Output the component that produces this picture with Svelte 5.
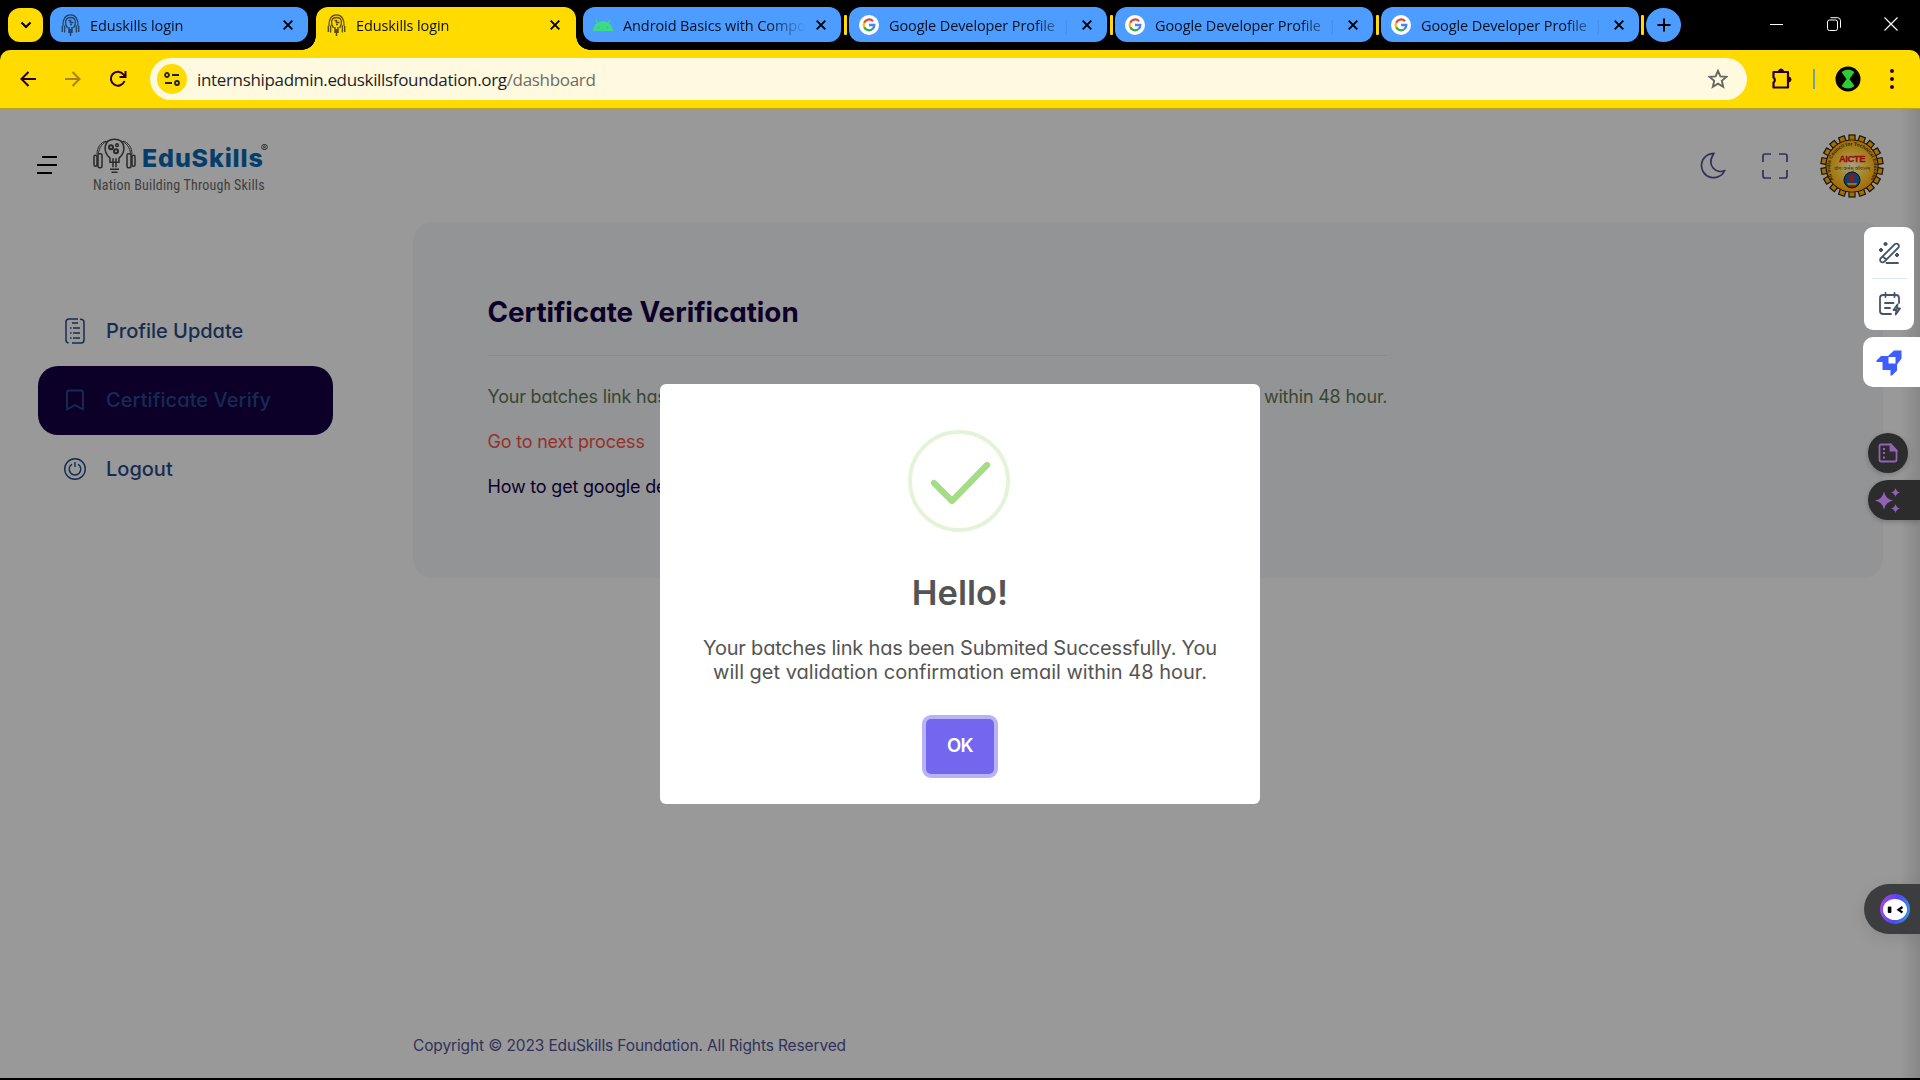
<script>
  const tabs = [
    { title: 'Eduskills login', icon: 'edu' },
    { title: 'Eduskills login', icon: 'edu', active: true },
    { title: 'Android Basics with Compo', icon: 'android', sep: true },
    { title: 'Google Developer Profile  |', icon: 'google', sep: true },
    { title: 'Google Developer Profile  |', icon: 'google', sep: true },
    { title: 'Google Developer Profile  |', icon: 'google', sep: true },
  ];
  const teeth = Array.from({ length: 18 }, (_, i) => i * 20);
</script>

{#snippet bulb(size)}
  <svg class="bulb" width={size} height={size * 0.82} viewBox="0 0 43 35" fill="none" stroke="currentColor" stroke-width="1.500">
    <path d="M17 20C9 13 11 1 21.500 1S34 13 26 20v4h-9z" />
    <path d="M5 17C6 9 10 4 15 3M38 17C37 9 33 4 28 3M4 16C4 9 8 4 13 3M39 16C39 9 35 4 30 3" stroke-width="1" />
    <rect x="1" y="17" width="3" height="11" rx="1.500" /><rect x="5" y="15.500" width="4" height="14" rx="1.500" />
    <rect x="39" y="17" width="3" height="11" rx="1.500" /><rect x="34" y="15.500" width="4" height="14" rx="1.500" />
    <circle cx="18" cy="9" r="2" stroke-width="2" /><circle cx="24" cy="7" r="1.300" /><circle cx="23" cy="13" r="2" stroke-width="2" />
    <path d="M17 31h9M18.500 34h6M20 20v9M23 20v9" />
  </svg>
{/snippet}

<div class="screen">
  <div class="strip">
    <div class="search"><svg width="14" height="14" viewBox="0 0 14 14" fill="none" stroke="#000" stroke-width="2.200"><path d="M2.500 4.500L7 9l4.500-4.500" /></svg></div>
    {#each tabs as tab}
      <div class="tab" class:active={tab.active}>
        <span class="fav">
          {#if tab.icon === 'edu'}
            <svg width="19" height="22" viewBox="0 0 19 22" fill="none" stroke="currentColor"><path d="M6.500 14C3.500 10 3.500 3.500 9.500 3.500s6 6.500 3 10.500M2 12C1.500 5 4.500.8 9.500.8S17.500 5 17 12" stroke-width="1.300" /><path d="M1.300 12v6M3.600 11.500v7M17.700 12v6M15.400 11.500v7" stroke-width="1.400" /><path d="M8 13v6M11 13v6M9.500 15v7" stroke-width="1.500" /><path d="M7.500 6.500h2v2h3M9 10.500h2" stroke-width="1.600" /></svg>
          {:else if tab.icon === 'android'}
            <svg width="20" height="20" viewBox="0 0 20 20"><path d="M0 16a10 10 0 0 1 20 0z" fill="#3ddc84" /><path d="M4.500 8L3 4.500M15.500 8L17 4.500" stroke="#3ddc84" stroke-width="1.200" /><circle cx="5.500" cy="12.500" r=".9" fill="#4c9dff" /><circle cx="14.500" cy="12.500" r=".9" fill="#4c9dff" /></svg>
          {:else}
            <svg width="20" height="20" viewBox="0 0 20 20" fill="none" stroke-width="2.300"><circle cx="10" cy="10" r="10" fill="#fff" /><path d="M14 6.200A5.300 5.300 0 0 0 5.200 7.700" stroke="#ea4335" /><path d="M5.200 7.700a5.300 5.300 0 0 0 0 4.600" stroke="#fbbc05" /><path d="M5.200 12.300a5.300 5.300 0 0 0 8.300 1.700" stroke="#34a853" /><path d="M13.500 14A5.300 5.300 0 0 0 15.300 10H10" stroke="#4285f4" /></svg>
          {/if}
        </span>
        <span class="title">{tab.title}</span>
        <svg class="x" width="10" height="10" viewBox="0 0 10 10" stroke="#000" stroke-width="1.900"><path d="M.7.7l8.600 8.600M9.300.7L.7 9.300" /></svg>
      </div>
      {#if tab.sep}<i class="sep"></i>{/if}
    {/each}
    <div class="plus"><svg width="14" height="14" viewBox="0 0 14 14" stroke="#000" stroke-width="2"><path d="M7 .5v13M.5 7h13" /></svg></div>
    <div class="win">
      <svg width="14" height="14" viewBox="0 0 14 14" stroke="#fff"><path d="M0 7.500h13" /></svg>
      <svg width="14" height="14" viewBox="0 0 14 14" fill="none" stroke="#fff"><rect x=".5" y="3" width="10" height="10.500" rx="2" /><path d="M3.500.7h7a3 3 0 0 1 3 3v7" /></svg>
      <svg width="14" height="14" viewBox="0 0 14 14" stroke="#fff" stroke-width="1.200"><path d="M.5.5l13 13M13.500.5l-13 13" /></svg>
    </div>
  </div>

  <div class="toolbar-bg">
    <div class="toolbar">
      <div class="nav">
        <svg width="18" height="18" viewBox="0 0 18 18" fill="none" stroke="#270018" stroke-width="2"><path d="M17 9H3M9.500 2L2.500 9l7 7" /></svg>
        <svg width="18" height="18" viewBox="0 0 18 18" fill="none" stroke="#a68219" stroke-width="2"><path d="M1 9h14M8.500 2l7 7-7 7" /></svg>
        <svg width="18" height="18" viewBox="0 0 18 18" fill="none" stroke="#270018" stroke-width="2"><path d="M15.500 11A7 7 0 1 1 14.500 4.500L16 6.500M16.500 1v6h-6" /></svg>
      </div>
      <div class="omni">
        <span class="site"><svg width="16" height="14" viewBox="0 0 16 14" fill="none" stroke="#222" stroke-width="1.800"><circle cx="3" cy="3" r="2" /><path d="M8 3h7M1 11h7" /><circle cx="13" cy="11" r="2" /></svg></span>
        <span class="url">internshipadmin.eduskillsfoundation.org<em>/dashboard</em></span>
        <svg class="star" width="20" height="20" viewBox="0 0 20 20" fill="none" stroke="#666" stroke-width="1.900"><path d="M10 1.800l2.400 5.600 6 .5-4.600 4 1.400 5.900L10 14.700l-5.200 3.100 1.400-5.900-4.600-4 6-.5z" /></svg>
      </div>
      <svg class="puz" width="22" height="22" viewBox="0 0 22 22" fill="none" stroke="#270018" stroke-width="2.200"><path d="M2.500 4h14.500v15.500H2.500v-5a3 3 0 0 0 0-5z" stroke-linejoin="round" /><path d="M7.500 3.500a2.500 2.500 0 0 1 5 0zM17.500 9a2.500 2.500 0 0 1 0 5z" fill="#270018" stroke-width="1" /></svg>
      <i class="bsep"></i>
      <svg class="ava" width="26" height="26" viewBox="0 0 26 26"><circle cx="13" cy="13" r="12.500" /><path d="M6.500 6Q13 1 19.500 6L14.500 13l5 7Q13 25 6.500 20l5-7z" fill="#2fcb35" /></svg>
      <svg class="dots" width="4" height="20" viewBox="0 0 4 20" fill="#270018"><circle cx="2" cy="2" r="2" /><circle cx="2" cy="10" r="2" /><circle cx="2" cy="18" r="2" /></svg>
    </div>
  </div>

  <div class="page">
    <header>
      <svg class="burger" width="20" height="18" viewBox="0 0 20 18" stroke="#000" stroke-width="2"><path d="M5 1h15M0 9h20M0 17h15" /></svg>
      <div class="logo">
        <div class="brand">{@render bulb(43)}<b>EduSkills</b><sup>®</sup></div>
        <small>Nation Building Through Skills</small>
      </div>
      <div class="tools">
        <svg width="26" height="27" viewBox="0 0 26 27" fill="none" stroke="#31315b" stroke-width="1.700"><path d="M14 1.300A12.200 12.200 0 1 0 24.800 18.500C16.500 22 5.500 14 14 1.300z" stroke-linejoin="round" /></svg>
        <svg class="full" width="26" height="26" viewBox="0 0 26 26" fill="none" stroke="#31315b" stroke-width="1.700"><path d="M1 9V3q0-2 2-2h6M17 1h6q2 0 2 2v6M25 17v6q0 2-2 2h-6M9 25H3q-2 0-2-2v-6" /></svg>
        <svg class="aicte" width="64" height="64" viewBox="-32 -32 64 64">
          <defs>
            <radialGradient id="gold"><stop offset="0" stop-color="#a8a184" /><stop offset=".5" stop-color="#a58a30" /><stop offset="1" stop-color="#a66d00" /></radialGradient>
            <path id="arc" d="M-18.500 13.500A22 22 0 1 1 18.500 13.500" />
          </defs>
          {#each teeth as a}<rect x="-3" y="-31" width="6" height="8" fill="#a66d00" stroke="#1a1406" stroke-width="1.200" transform="rotate({a})" />{/each}
          <circle r="26" fill="#a66d00" stroke="#1a1406" stroke-width="1.200" />
          <circle r="25.400" fill="url(#gold)" />
          <text class="ring"><textPath href="#arc" textLength="97">All India Council for Technical Education</textPath></text>
          <text class="aic" y="-4" text-anchor="middle">AICTE</text>
          <text class="hin" y="4" text-anchor="middle">योगः कर्मसु कौशलम्</text>
          <circle cy="14" r="8" fill="#123f66" stroke="#111" />
          <path d="M-5 17h10q-1 3-4 3h-2q-3 0-4-3z" fill="#8d7a10" /><path d="M0 7q4 5 1 9h-2q-3-4 1-9zM-3 19h6v2h-6z" fill="#a00f14" />
        </svg>
      </div>
    </header>

    <div class="body">
      <nav>
        <a class="item"><svg width="22" height="26" viewBox="0 0 22 26" fill="none" stroke="#152c52" stroke-width="1.500"><path d="M14 1H5Q2 1 2 4v18q0 2.500 2.500 3M16 1.200q4 0 4 3V22q0 3-3 3H8M8 5h6M9 10h7M9 15h7M9 20h7M6 10h1.500M6 15h1.500M6 20h1.500" /></svg>Profile Update</a>
        <a class="item on"><svg width="22" height="26" viewBox="0 0 22 26" fill="none" stroke="#152c52" stroke-width="1.900"><path d="M3 22.500V5.500q0-2 2-2h12q2 0 2 2v17l-8-4.500z" stroke-linejoin="round" /></svg>Certificate Verify</a>
        <a class="item"><svg width="22" height="26" viewBox="0 0 22 26" fill="none" stroke="#152c52" stroke-width="1.400"><circle cx="11" cy="13" r="10.300" /><path d="M8 8.200a5.800 5.800 0 1 0 6 0M11 6v5" /></svg>Logout</a>
      </nav>
      <main>
        <section class="card">
          <div class="inner">
            <h1>Certificate Verification</h1>
            <p class="green">Your batches link has been Submited Successfully. You will get validation confirmation email within 48 hour.</p>
            <p class="red">Go to next process</p>
            <p class="dark">How to get google developer profile link</p>
          </div>
        </section>
        <footer>Copyright © 2023 EduSkills Foundation. All Rights Reserved</footer>
      </main>
    </div>
    <div class="shade"></div>

    <div class="overlay">
      <div class="modal">
        <svg class="ok-ring" width="102" height="102" viewBox="0 0 102 102" fill="none"><circle cx="51" cy="51" r="49" stroke="#e3f4d9" stroke-width="4" /><path d="M26 53l18 18 35-36" stroke="#a5dc86" stroke-width="6.200" stroke-linecap="round" stroke-linejoin="round" /></svg>
        <h2>Hello!</h2>
        <p>Your batches link has been Submited Successfully. You<br /><span>will get validation confirmation email within 48 hour.</span></p>
        <button>OK</button>
      </div>
    </div>

    <aside class="widgets">
      <div class="w1">
        <svg width="24" height="24" viewBox="0 0 24 24" fill="none" stroke="#455565" stroke-width="1.800"><path d="M2.500 17.500L17 3q2-1 3.200.3T20.500 6.500L6 21q-2 1-3.200-.3T2.500 17.500zM4.500 15.500l4 3M8.500 22H20" stroke-linecap="round" /><path d="M7.500 1v4M5.500 3h4M3 7v4M1 9h4M19 12v4M17 14h4" stroke-width="2.200" /></svg>
        <i></i>
        <svg width="24" height="24" viewBox="0 0 24 24" fill="none" stroke="#455565" stroke-width="1.800" stroke-linecap="round"><path d="M13 22H5q-3 0-3-3V6q0-3 3-3h13q3 0 3 3v5M7.500 1v4M16.500 1v4M7 11h8.500M7 16h5" /><path d="M19.500 12.500l-4 5.500h3l-.8 4.500 4.300-6h-3z" stroke-linejoin="round" /></svg>
      </div>
      <div class="w2"><svg width="26" height="26" viewBox="0 0 26 26" fill="#3f5cff"><path fill-rule="evenodd" d="M.5 10.500L5 6h7l6-5.500h7.500v8L21 14.500v6L16 25.500h-1.500V20H6.500v-8H.500zM12.500 7v6.500h7V7z" /></svg></div>
      <div class="w3"><svg width="20" height="20" viewBox="0 0 20 20" fill="none" stroke="#9163b6" stroke-width="1.800"><path d="M13 1.500H3q-1.500 0-1.500 1.500v14q0 1.500 1.500 1.500h14q1.500 0 1.500-1.500V7.500z" /><path d="M12.500 1.500v6h6z" fill="#9163b6" /><path d="M6 5v2M6 9v2M6 13.500v2" stroke-width="2" /></svg></div>
      <div class="w4"><svg width="25" height="25" viewBox="0 0 25 25" fill="#9163b6"><path d="M9 3.500q1.500 7.500 9 9-7.500 1.500-9 9-1.500-7.500-9-9 7.500-1.500 9-9zM20.500 0q.8 3.700 4.500 4.500-3.700.8-4.500 4.500-.8-3.700-4.500-4.500Q19.700 3.700 20.500 0zM20.500 16q.8 3.700 4.500 4.500-3.700.8-4.500 4.500-.8-3.700-4.500-4.500 3.700-.8 4.500-4.500z" /></svg></div>
      <div class="w5"><svg width="30" height="30" viewBox="0 0 30 30"><defs><linearGradient id="bot" x1="0" y1=".6" x2="1" y2=".8"><stop offset="0" stop-color="#9b45e8" /><stop offset=".5" stop-color="#5146f5" /><stop offset="1" stop-color="#2e9ed8" /></linearGradient></defs><circle cx="15" cy="15" r="15" fill="url(#bot)" /><ellipse cx="15" cy="15.500" rx="12" ry="10.500" fill="#fff" /><rect x="7.800" y="12.500" width="3.600" height="6.500" rx="1" /><path d="M22.500 13l-4 2.800 4 2.700" fill="none" stroke="#000" stroke-width="2.200" /></svg></div>
    </aside>
  </div>
</div>

<style>
  :global(body) { margin: 0; background: #000; overflow: hidden; }
  * { box-sizing: border-box; }
  svg { display: block; flex: none; }
  .screen { width: 1920px; height: 1080px; display: flex; flex-direction: column; background: #000; border-bottom: 2px solid #000; font-family: Inter, sans-serif; font-feature-settings: "cv11"; overflow: hidden; }
  .strip { height: 50px; flex: none; display: flex; padding: 7px 22px 0 8px; align-items: flex-start; }
  .search { width: 35px; height: 34px; margin: 1px 7px 0 0; border-radius: 12px; background: #ffdb00; display: grid; place-items: center; }
  .tab { position: relative; width: 258px; height: 35px; flex: none; margin-right: 8px; border-radius: 12px; background: #4c9dff; display: flex; align-items: center; padding: 0 15px 0 10px; font-family: "Open Sans", "Noto Sans", sans-serif; font-size: 14.500px; letter-spacing: -.1px; color: #08101f; }
  .tab.active { width: 260px; margin-right: 7px; height: 43px; padding: 0 16px 8px 10px; background: #ffdb00; border-radius: 12px 12px 0 0; }
  .tab.active::before, .tab.active::after { content: ''; position: absolute; bottom: 0; width: 14px; height: 14px; }
  .tab.active::before { left: -14px; background: radial-gradient(circle at 0 0, transparent 13.500px, #ffdb00 14px); }
  .tab.active::after { right: -14px; background: radial-gradient(circle at 100% 0, transparent 13.500px, #ffdb00 14px); }
  .fav { width: 20px; display: grid; place-items: center; color: #27435f; }
  .active .fav { color: #5b4e14; }
  .title { width: 184px; padding-top: 2px; margin-left: 10px; white-space: pre; mask-image: linear-gradient(90deg, #000 145px, transparent 182px); }
  .x { margin-left: auto; }
  .sep { width: 3px; height: 20px; margin: 8px 2px 0 -5px; background: #ffdb00; border-radius: 1px; flex: none; }
  .sep:has(+ .plus) { margin-left: -6px; }
  .plus { width: 35px; height: 34px; margin: 1px 0 0 0; border-radius: 50%; background: #4c9dff; display: grid; place-items: center; flex: none; }
  .win { margin-left: auto; margin-top: 10px; display: flex; gap: 43px; }
  .toolbar-bg { background: #000; flex: none; }
  .toolbar { height: 58px; background: #ffdb00; border-radius: 10px 10px 0 0; display: flex; align-items: center; padding: 0 26px 0 19px; }
  .nav { width: 131px; display: flex; gap: 27px; }
  .omni { width: 1597px; height: 42px; border-radius: 21px; background: #fff9e0; display: flex; align-items: center; padding: 0 19px 0 7px; }
  .site { width: 30px; height: 30px; border-radius: 50%; background: #ffdb00; display: grid; place-items: center; }
  .url { margin-left: 10px; font: 17px "Open Sans", sans-serif; letter-spacing: -.33px; color: #1d1f29; }
  .url em { font-style: normal; color: #6e6b65; }
  .star { margin-left: auto; }
  .puz { margin-left: 24px; }
  .bsep { width: 2px; height: 20px; background: #6fa39a; margin: 0 20px 0 20px; flex: none; }
  .dots { margin-left: auto; }
  .page { position: relative; flex: 1; min-height: 0; background: #999; display: flex; flex-direction: column; border-top: 1px solid #b8a02a; }
  header { height: 113px; flex: none; display: flex; padding: 0 36px 0 37px; align-items: center; }
  .burger { margin: 0 36px 2px 0; }
  .logo { width: 200px; }
  .brand { display: flex; height: 35px; align-items: center; color: #2a2a2a; }
  .brand b { margin: 3px 0 0 6px; font: 800 25px/28px Inter, sans-serif; color: #063e6b; letter-spacing: .85px; }
  .brand sup { font-size: 11px; line-height: 12px; align-self: flex-start; margin: 3px 0 0 -3px; }
  .logo small { display: block; margin-top: 3px; font: 14px/16px "Roboto Condensed", sans-serif; letter-spacing: .2px; color: #3f3f3f; white-space: nowrap; }
  .tools { margin-left: auto; display: flex; align-items: center; }
  .full { margin: 0 32px 0 36px; }
  .ring { font: 700 5px "Liberation Sans", sans-serif; fill: #222; }
  .aic { font: 700 9.500px "Liberation Sans", sans-serif; fill: #960b10; stroke: #960b10; stroke-width: .3; letter-spacing: -.5px; }
  .hin { font: 5px "Noto Sans", sans-serif; fill: #332; }
  .body { flex: 1; display: flex; }
  nav { width: 413px; padding: 75px 80px 0 38px; }
  .item { height: 69px; display: flex; align-items: center; gap: 20px; padding: 0 0 2px 26px; font-size: 20px; font-weight: 500; color: #152c52; border-radius: 20px; }
  .item.on { background: #0c0029; padding-bottom: 1px; letter-spacing: .08px; }
  main { flex: 1; padding-right: 37px; display: flex; flex-direction: column; }
  .card { height: 356px; border-radius: 20px; background: #929496; padding: 70px 75px 0 74.500px; }
  .inner { width: 899px; }
  h1 { margin: 0 0 21px; height: 64px; border-bottom: 1px solid #888a8d; font-weight: 700; font-size: 27.800px; line-height: 40px; letter-spacing: -.03px; color: #0c0029; }
  .inner p { margin: 0; height: 45px; font-size: 18px; letter-spacing: -.2px; line-height: 40px; white-space: nowrap; }
  .green { color: #3a4630; } .red { color: #98302a; } .dark { color: #0c0029; }
  footer { margin-top: auto; padding-bottom: 20px; font-size: 15.500px; letter-spacing: -.13px; line-height: 24px; color: #31315b; }
  .shade { position: absolute; right: 0; top: 0; bottom: 0; width: 20px; background: linear-gradient(90deg, transparent, rgba(0,0,0,.12)); }
  .overlay { position: absolute; inset: 0; display: flex; justify-content: center; align-items: flex-start; padding-top: 275px; }
  .modal { width: 600px; height: 420px; background: #fff; border-radius: 6px; display: flex; flex-direction: column; align-items: center; padding-top: 46px; color: #545454; }
  .ok-ring { margin-right: 2px; }
  h2 { margin: 38px 0 0; font-weight: 600; font-size: 34.500px; line-height: 45px; letter-spacing: 0; color: #545454; }
  .modal p { margin: 21px 0 0; font-size: 20px; letter-spacing: -.2px; line-height: 24px; text-align: center; white-space: nowrap; }
  .modal p span { letter-spacing: 0; }
  button { width: 68px; height: 55px; margin-top: 35px; padding: 0 6px 3px; border: 0; border-radius: 5px; background: #7367f0; box-shadow: 0 0 0 4px #b8b3f5; color: #fff; font: 600 18.500px Inter, sans-serif; letter-spacing: -.5px; }
  .widgets { position: absolute; right: 0; top: 118px; width: 57px; height: 720px; display: flex; flex-direction: column; align-items: flex-end; }
  .w1 { width: 50px; height: 103px; margin-right: 6px; border-radius: 9px; background: #fff; display: flex; flex-direction: column; align-items: center; justify-content: space-between; padding: 14px 0 14px 1px; }
  .w1 i { width: 35px; height: 1px; background: #dfe3ea; }
  .w2 { width: 57px; height: 50px; margin-top: 7px; border-radius: 10px 0 0 10px; background: #fff; display: flex; align-items: center; padding: 2px 0 0 13px; }
  .w3 { width: 40px; height: 40px; margin: 46px 12px 0 0; border-radius: 50%; background: #2c2c2c; display: grid; place-items: center; box-shadow: 0 2px 5px rgba(0,0,0,.2); }
  .w4 { width: 52px; height: 40px; margin-top: 7px; border-radius: 20px 0 0 20px; background: #2c2c2c; display: flex; align-items: center; padding: 1px 0 0 7px; box-shadow: 0 2px 5px rgba(0,0,0,.2); }
  .w5 { width: 56px; height: 50px; margin-top: 364px; border-radius: 25px 0 0 25px; background: #3c3d3f; display: flex; align-items: center; padding-left: 16px; box-shadow: 0 4px 16px rgba(0,0,0,.1); }
</style>
